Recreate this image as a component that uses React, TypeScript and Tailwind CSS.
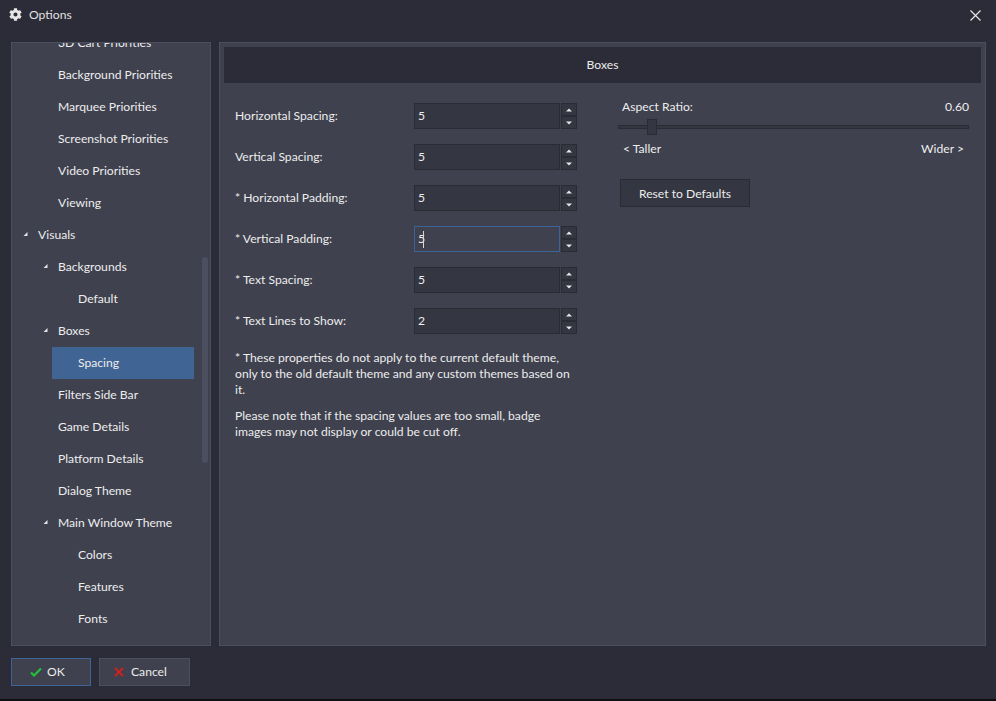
import { FaCog } from "react-icons/fa";

type TreeRow = {
  label: string;
  depth: number;
  open?: boolean;
  selected?: boolean;
};

const treeRows: TreeRow[] = [
  { label: "3D Cart Priorities", depth: 1 },
  { label: "Background Priorities", depth: 1 },
  { label: "Marquee Priorities", depth: 1 },
  { label: "Screenshot Priorities", depth: 1 },
  { label: "Video Priorities", depth: 1 },
  { label: "Viewing", depth: 1 },
  { label: "Visuals", depth: 0, open: true },
  { label: "Backgrounds", depth: 1, open: true },
  { label: "Default", depth: 2 },
  { label: "Boxes", depth: 1, open: true },
  { label: "Spacing", depth: 2, selected: true },
  { label: "Filters Side Bar", depth: 1 },
  { label: "Game Details", depth: 1 },
  { label: "Platform Details", depth: 1 },
  { label: "Dialog Theme", depth: 1 },
  { label: "Main Window Theme", depth: 1, open: true },
  { label: "Colors", depth: 2 },
  { label: "Features", depth: 2 },
  { label: "Fonts", depth: 2 },
];

const spinners = [
  { label: "Horizontal Spacing:", value: "5" },
  { label: "Vertical Spacing:", value: "5" },
  { label: "* Horizontal Padding:", value: "5" },
  { label: "* Vertical Padding:", value: "5", focused: true },
  { label: "* Text Spacing:", value: "5" },
  { label: "* Text Lines to Show:", value: "2" },
];

function Caret() {
  return (
    <svg width="7" height="7" viewBox="0 0 7 7" className="shrink-0 -translate-y-px">
      <path d="M4.5 1V5H.5z" fill="#e4e4e4" />
    </svg>
  );
}

function TreeItem({ row }: { row: TreeRow }) {
  if (row.depth === 2) {
    return (
      <div className={`ml-[40px] flex h-8 w-[142px] items-center pl-[26px] pt-px ${row.selected ? "bg-[#406494]" : ""}`}>
        {row.label}
      </div>
    );
  }
  return (
    <div className={`flex h-8 items-center gap-[8px] pt-px ${row.depth === 0 ? "pl-[11px]" : "pl-[31px]"}`}>
      {row.open ? <Caret /> : <span className="w-[7px]" />}
      <span>{row.label}</span>
    </div>
  );
}

function SpinButton({ up }: { up?: boolean }) {
  return (
    <button className="flex h-[13px] w-4 items-center justify-center border border-[#2a2b35] bg-[#343641]">
      <svg width="6" height="4" viewBox="0 0 6 4">
        <path d={up ? "M3 0.5 6 3.5H0z" : "M0 0.5H6L3 3.5z"} fill="#e8e8e8" />
      </svg>
    </button>
  );
}

function Spinner({ value, focused }: { value: string; focused?: boolean }) {
  return (
    <div className="flex h-[26px] w-[163px] gap-[1px]">
      <div
        className={`flex h-[26px] w-[146px] items-center border pl-[3px] ${
          focused ? "border-[#3e6497] bg-[#3f414e]" : "border-[#2a2b35] bg-[#343641]"
        }`}
      >
        <span>{value}</span>
        {focused ? <span className="ml-[-2px] h-[17px] w-px bg-[#d8d8c8]" /> : null}
      </div>
      <div className="flex flex-col justify-between">
        <SpinButton up />
        <SpinButton />
      </div>
    </div>
  );
}

export default function App() {
  return (
    <div className="flex h-[701px] w-[996px] flex-col overflow-hidden bg-[#2b2c37] font-['Lato',sans-serif] text-[12.15px] text-[#ededed]">
      <header className="flex h-[30px] shrink-0 items-center justify-between pl-[9px] pr-[15px]">
        <div className="flex items-center gap-[7px]">
          <FaCog size={13} className="text-[#e6e6e6]" />
          <span className="text-[#e2e2e2]">Options</span>
        </div>
        <svg width="11" height="11" viewBox="0 0 11 11">
          <path d="M.5.5l10 10M10.5.5l-10 10" stroke="#e6e6e6" strokeWidth="1.2" fill="none" />
        </svg>
      </header>

      <div className="mt-3 flex h-[604px] shrink-0 gap-2 pl-[11px] pr-[10px]">
        <aside className="relative h-full w-[200px] shrink-0 overflow-hidden border border-[#4c4f5f] bg-[#3f414e]">
          <div className="-mt-[16px]">
            {treeRows.map((row) => (
              <TreeItem key={row.label} row={row} />
            ))}
          </div>
          <div className="absolute left-[190px] top-[214px] h-[206px] w-[6px] rounded-[3px] bg-[#4c4f5f]" />
        </aside>

        <main className="h-full flex-1 border border-[#4c4f5f] bg-[#3f414e] p-1">
          <div className="flex h-[36px] items-center justify-center bg-[#2b2c37]">Boxes</div>
          <div className="flex pl-[11px]">
            <div className="w-[342px] pt-[20px]">
              <div className="flex flex-col gap-[15px]">
                {spinners.map((s) => (
                  <div key={s.label} className="flex items-center">
                    <span className="w-[179px]">{s.label}</span>
                    <Spinner value={s.value} focused={s.focused} />
                  </div>
                ))}
              </div>
              <p className="mt-[16px] leading-[16px]">
                * These properties do not apply to the current default theme, only to the old default theme and any custom themes based on it.
              </p>
              <p className="mt-[10px] leading-[16px]">
                Please note that if the spacing values are too small, badge images may not display or could be cut off.
              </p>
            </div>
            <div className="ml-[41px] w-[351px] pt-[15px]">
              <div className="flex justify-between pl-1">
                <span>Aspect Ratio:</span>
                <span>0.60</span>
              </div>
              <div className="relative mt-[9px] h-[4px] border border-[#2a2b35] bg-[#343641]">
                <div className="absolute left-[28px] top-[-7px] h-4 w-[10px] border border-[#2a2b35] bg-[#343641]" />
              </div>
              <div className="mt-[11px] flex justify-between px-[5px]">
                <span>&lt; Taller</span>
                <span>Wider &gt;</span>
              </div>
              <button className="ml-[2px] mt-[21px] flex h-[28px] w-[130px] items-center justify-center border border-[#2a2b35] bg-[#343641] pt-px">
                Reset to Defaults
              </button>
            </div>
          </div>
        </main>
      </div>

      <footer className="mt-3 flex gap-2 pl-[11px]">
        <button className="flex h-[28px] w-[80px] items-center border border-[#3e6497] bg-[#3f414e] pl-[18px]">
          <svg width="12" height="10" viewBox="0 0 12 10">
            <path d="M1 5.5 4 8.5 11 1.5" stroke="#22c03a" strokeWidth="2.2" fill="none" />
          </svg>
          <span className="ml-[5px] pt-px">OK</span>
        </button>
        <button className="flex h-[28px] w-[91px] items-center border border-[#4c4f5f] bg-[#3f414e] pl-[14px]">
          <svg width="10" height="10" viewBox="0 0 10 10">
            <path d="M1 1l8 8M9 1 1 9" stroke="#d81e1e" strokeWidth="1.8" fill="none" />
          </svg>
          <span className="ml-[7px] pt-px">Cancel</span>
        </button>
      </footer>

      <div className="mt-auto h-[2px] shrink-0 bg-[#0f0f11]" />
    </div>
  );
}
